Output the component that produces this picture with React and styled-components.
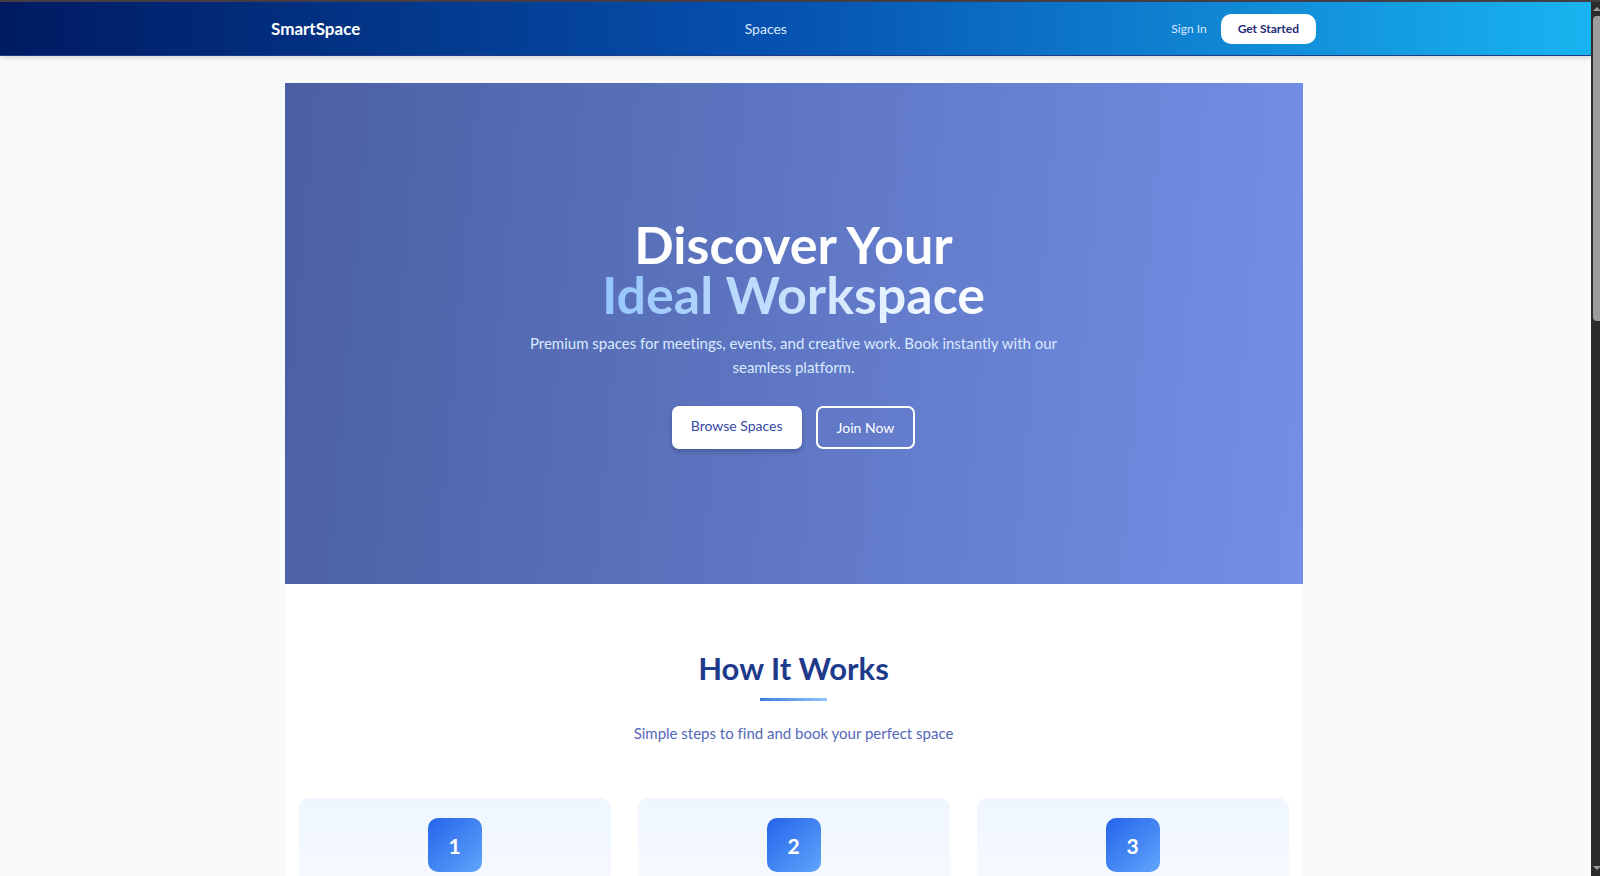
import React from "react";
import styled, { createGlobalStyle } from "styled-components";

const GlobalStyle = createGlobalStyle`
  *, *::before, *::after { box-sizing: border-box; }
  body {
    margin: 0;
    background: #f9fafb;
    font-family: Lato, "Noto Sans", sans-serif;
    font-size: 14px;
    font-variant-ligatures: none;
  }
  h1, h2, p, ol { margin: 0; padding: 0; }
  a { color: inherit; text-decoration: none; }
`;

const Shell = styled.div`
  display: flex;
  height: 100vh;
  overflow: hidden;
  border-top: 2px solid #463c46;
`;

const Viewport = styled.div`
  flex: 1;
  min-width: 0;
  overflow: hidden;
  background: #f9fafc;
`;

const Header = styled.header`
  padding-right: 4px;
  background: linear-gradient(90deg, #001a61 0%, #0653b2 50%, #18b4f0 100%);
  border-bottom: 1px solid #1e3a8a;
  box-shadow: 0 2px 5px rgba(0, 0, 0, 0.14);
`;

const Nav = styled.nav`
  display: flex;
  align-items: center;
  justify-content: space-between;
  max-width: 1045px;
  height: 53px;
  margin: 0 auto;
  color: #fff;
`;

const Brand = styled.a`
  font-size: 17px;
  font-weight: 700;
`;

const NavLink = styled.a`
  font-size: ${(p) => (p.$small ? 12 : 14)}px;
  color: #dbeafe;
`;

const Actions = styled.div`
  display: flex;
  align-items: center;
  gap: 14px;
`;

const StartButton = styled.button`
  height: 30px;
  padding: 0 17px;
  border: 0;
  border-radius: 10px;
  background: #fff;
  color: #1e2a78;
  font: inherit;
  font-size: 12px;
  font-weight: 700;
`;

const Page = styled.div`
  padding: 27px 4px 0 0;
`;

const Main = styled.main`
  max-width: 1018px;
  margin: 0 auto;
  background: #fff;
`;

const Hero = styled.section`
  display: flex;
  flex-direction: column;
  align-items: center;
  justify-content: center;
  min-height: 501px;
  padding: 24px;
  text-align: center;
  background: linear-gradient(95deg, #4b60a2 0%, #5f77c4 50%, #738fe6 100%);
`;

const HeroTitle = styled.h1`
  font-size: 52px;
  line-height: 50px;
  font-weight: 700;
  color: #fff;
`;

const Accent = styled.span`
  display: block;
  padding-bottom: 6px;
  background: linear-gradient(90deg, #93c5fd, #fff);
  background-clip: text;
  -webkit-background-clip: text;
  color: transparent;
`;

const Lead = styled.p`
  max-width: 560px;
  margin-top: 6px;
  font-size: 15px;
  line-height: 24px;
  color: #dbeafe;
`;

const HeroActions = styled.div`
  display: flex;
  gap: 14px;
  margin-top: 27px;
`;

const HeroLink = styled.a`
  height: 43px;
  padding: ${(p) => (p.$outline ? "0 19px" : "0 19px 4px")};
  display: flex;
  align-items: center;
  border-radius: 7px;
  border: ${(p) => (p.$outline ? "2px solid #fff" : "0")};
  background: ${(p) => (p.$outline ? "transparent" : "#fff")};
  color: ${(p) => (p.$outline ? "#fff" : "#3547a8")};
  box-shadow: ${(p) => (p.$outline ? "none" : "0 3px 5px rgba(0, 0, 0, 0.2)")};
`;

const Works = styled.section`
  padding: 67px 14px;
  text-align: center;
`;

const SectionTitle = styled.h2`
  font-size: 31px;
  line-height: 34px;
  font-weight: 700;
  color: #1e3a8a;

  &::after {
    content: "";
    display: block;
    width: 67px;
    height: 3px;
    margin: 13px auto 0;
    background: linear-gradient(90deg, #3b7ddd, #93c5fd);
  }
`;

const SectionText = styled.p`
  margin-top: 20px;
  font-size: 15px;
  line-height: 24px;
  color: #5468b8;
`;

const Steps = styled.ol`
  display: grid;
  grid-template-columns: repeat(3, 1fr);
  gap: 27px;
  margin-top: 53px;
  list-style: none;
`;

const Step = styled.li`
  display: flex;
  justify-content: center;
  min-height: 200px;
  padding: 20px;
  border-radius: 10px;
  background: linear-gradient(180deg, #eff6ff, #fff);
`;

const StepNumber = styled.span`
  display: flex;
  align-items: center;
  justify-content: center;
  width: 54px;
  height: 54px;
  border-radius: 10px;
  background: linear-gradient(135deg, #2563eb, #60a5fa);
  color: #fff;
  font-size: 21px;
  font-weight: 700;
`;

const Scrollbar = styled.div`
  display: flex;
  flex-direction: column;
  justify-content: space-between;
  width: 9px;
  padding: 4px 0 5px 2px;
  background: #2b2b2b;
`;

const Thumb = styled.div`
  flex: 0 0 305px;
  margin: 5px 0 auto;
  border-radius: 4px 0 0 4px;
  background: #9c9c9c;
`;

const Arrow = ({ d }) => (
  <svg width="7" height="5" viewBox="0 0 7 5" aria-hidden="true">
    <path d={d} fill="#9c9c9c" />
  </svg>
);

export default function App() {
  return (
    <>
      <GlobalStyle />
      <Shell>
        <Viewport>
          <Header>
            <Nav>
              <Brand href="#">SmartSpace</Brand>
              <NavLink href="#spaces">Spaces</NavLink>
              <Actions>
                <NavLink href="#sign-in" $small>Sign In</NavLink>
                <StartButton type="button">Get Started</StartButton>
              </Actions>
            </Nav>
          </Header>
          <Page>
            <Main>
              <Hero>
                <HeroTitle>
                  Discover Your <Accent>Ideal Workspace</Accent>
                </HeroTitle>
                <Lead>
                  Premium spaces for meetings, events, and creative work. Book
                  instantly with our seamless platform.
                </Lead>
                <HeroActions>
                  <HeroLink href="#spaces">Browse Spaces</HeroLink>
                  <HeroLink href="#join" $outline>Join Now</HeroLink>
                </HeroActions>
              </Hero>
              <Works>
                <SectionTitle>How It Works</SectionTitle>
                <SectionText>Simple steps to find and book your perfect space</SectionText>
                <Steps>
                  {[1, 2, 3].map((n) => (
                    <Step key={n}>
                      <StepNumber>{n}</StepNumber>
                    </Step>
                  ))}
                </Steps>
              </Works>
            </Main>
          </Page>
        </Viewport>
        <Scrollbar aria-hidden="true">
          <Arrow d="M0 5 L4 1 L7 4 V5 Z" />
          <Thumb />
          <Arrow d="M0 0 H7 V1 L4 4 Z" />
        </Scrollbar>
      </Shell>
    </>
  );
}
